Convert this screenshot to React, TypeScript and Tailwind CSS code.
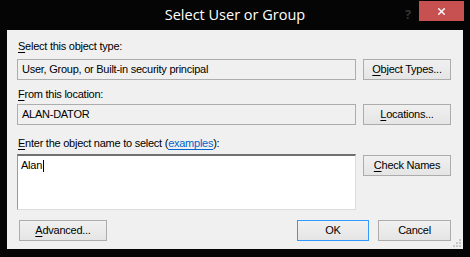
import { X } from "lucide-react";

function Btn({ children, className = "", focused = false }: { children: React.ReactNode; className?: string; focused?: boolean }) {
  return (
    <button
      className={`h-[21px] shrink-0 border ${focused ? "border-[#3399ff]" : "border-[#acacac]"} bg-linear-to-b from-[#f0f0f0] to-[#e5e5e5] text-[11px] leading-[13px] tracking-[-0.25px] text-black flex items-center justify-center ${className}`}
    >
      {children}
    </button>
  );
}

function U({ children }: { children: React.ReactNode }) {
  return <span className="underline underline-offset-[2px]">{children}</span>;
}

export default function App() {
  return (
    <div className="w-[470px] h-[257px] bg-[#050505] flex flex-col font-['Liberation_Sans',Arial,sans-serif] select-none">
      {/* title bar */}
      <div className="h-[30px] relative flex items-center justify-center">
        <span className="text-white text-[14.5px] font-['Open_Sans',sans-serif] leading-none mt-[1px]">Select User or Group</span>
        <span className="absolute left-[405px] top-[5px] text-[13px] font-bold text-[#333333] font-['Open_Sans',sans-serif]">?</span>
        <div className="absolute left-[419px] top-[1px] w-[45px] h-[20px] bg-[#c75050] flex items-center justify-center">
          <X size={11} strokeWidth={3.2} color="white" />
        </div>
      </div>

      {/* client area */}
      <div className="mx-[7px] h-[219px] bg-[#f0f0f0] pt-[10px] pl-[10px] pr-[12px] relative text-[11px] tracking-[-0.25px]">
        <div className="h-[13px] leading-[13px] text-black pl-[1px]">
          <U>S</U>elect this object type:
        </div>
        <div className="mt-[6px] flex gap-[7px]">
          <div className="w-[339px] h-[21px] border border-[#adadad] flex items-center pl-[4px] text-black">
            User, Group, or Built-in security principal
          </div>
          <Btn className="w-[88px]"><U>O</U>bject Types...</Btn>
        </div>

        <div className="mt-[8px] h-[13px] leading-[13px] text-black pl-[1px]">
          <U>F</U>rom this location:
        </div>
        <div className="mt-[3px] flex gap-[7px]">
          <div className="w-[339px] h-[21px] border border-[#adadad] flex items-center pl-[4px] text-black">
            ALAN-DATOR
          </div>
          <Btn className="w-[88px]"><U>L</U>ocations...</Btn>
        </div>

        <div className="mt-[12px] h-[13px] leading-[13px] text-black pl-[1px]">
          <U>E</U>nter the object name to select (<span className="text-[#0066cc] underline underline-offset-[2px]">examples</span>):
        </div>
        <div className="mt-[4px] flex items-start gap-[7px]">
          <div className="w-[339px] h-[56px] bg-white border-t-2 border-t-[#707070] border-l border-l-[#9a9a9a] border-r border-r-[#dcdcdc] border-b border-b-[#dcdcdc] pl-[3px] pt-[3px] leading-[13px] text-black flex items-start">
            <span>Alan</span>
            <span className="inline-block w-[1px] h-[12px] bg-black mt-[1px] ml-[1px]" />
          </div>
          <Btn className="w-[88px] mt-[1px]"><U>C</U>heck Names</Btn>
        </div>

        <div className="mt-[10px] flex items-center">
          <Btn className="w-[88px] ml-[2px]"><U>A</U>dvanced...</Btn>
          <div className="flex-1" />
          <Btn className="w-[72px]" focused>OK</Btn>
          <Btn className="w-[73px] ml-[9px]">Cancel</Btn>
        </div>

        <svg className="absolute right-[2px] bottom-[2px]" width="8" height="8" viewBox="0 0 8 8">
          <rect x="6" y="0" width="2" height="2" fill="#c8c8c8" />
          <rect x="3" y="3" width="2" height="2" fill="#c8c8c8" />
          <rect x="6" y="3" width="2" height="2" fill="#c8c8c8" />
          <rect x="0" y="6" width="2" height="2" fill="#c8c8c8" />
          <rect x="3" y="6" width="2" height="2" fill="#c8c8c8" />
          <rect x="6" y="6" width="2" height="2" fill="#c8c8c8" />
        </svg>
      </div>
    </div>
  );
}
